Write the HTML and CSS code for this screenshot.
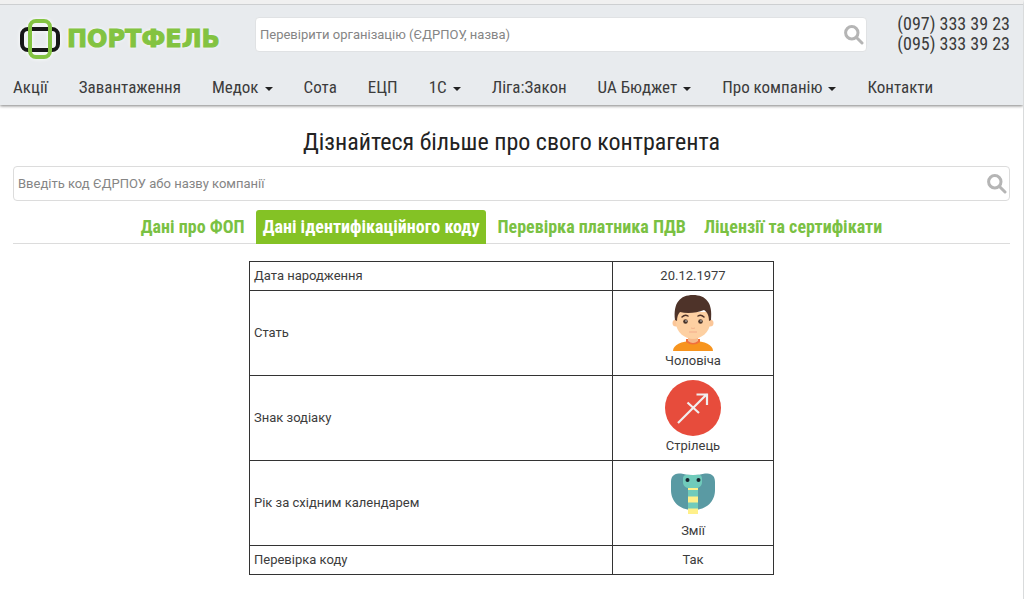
FILE: index.html
```html
<!DOCTYPE html>
<html lang="uk">
<head>
<meta charset="utf-8">
<meta name="viewport" content="width=device-width, initial-scale=1">
<title>Портфель</title>
<link rel="stylesheet" href="styles.css">
</head>
<body>
<header class="header">
  <div class="top">
    <a class="logo" href="#">
      <svg class="logo-mark" viewBox="0 0 42 42" aria-hidden="true">
        <rect x="3" y="11" width="36" height="21" rx="6" fill="none" stroke="#171717" stroke-width="4"/>
        <rect x="11" y="3" width="20" height="36" rx="6" fill="none" stroke="#83c341" stroke-width="4"/>
      </svg>
      <span class="logo-text">ПОРТФЕЛЬ</span>
    </a>
    <form class="search search-top" role="search">
      <input class="search-input" type="text" aria-label="Перевірити організацію" placeholder="Перевірити організацію (ЄДРПОУ, назва)">
      <button class="search-button" type="button" aria-label="Шукати">
        <svg viewBox="0 0 20 20" aria-hidden="true"><circle cx="7.800" cy="7.800" r="6.200"/><path d="M12.500 12.500L18 18"/></svg>
      </button>
    </form>
    <div class="phones"><a href="tel:0973333923">(097) 333 39 23</a><a href="tel:0953333923">(095) 333 39 23</a></div>
  </div>
  <nav class="nav">
    <a href="#">Акції</a>
    <a href="#">Завантаження</a>
    <a class="has-menu" href="#">Медок</a>
    <a href="#">Сота</a>
    <a href="#">ЕЦП</a>
    <a class="has-menu" href="#">1С</a>
    <a href="#">Ліга:Закон</a>
    <a class="has-menu" href="#">UA Бюджет</a>
    <a class="has-menu" href="#">Про компанію</a>
    <a href="#">Контакти</a>
  </nav>
</header>
<main class="main">
  <h1 class="title">Дізнайтеся більше про свого контрагента</h1>
  <form class="search" role="search">
    <input class="search-input" type="text" aria-label="Код або назва компанії" placeholder="Введіть код ЄДРПОУ або назву компанії">
    <button class="search-button" type="button" aria-label="Шукати">
      <svg viewBox="0 0 20 20" aria-hidden="true"><circle cx="7.800" cy="7.800" r="6.200"/><path d="M12.500 12.500L18 18"/></svg>
    </button>
  </form>
  <nav class="tabs">
    <a class="tab" href="#">Дані про ФОП</a>
    <a class="tab active" href="#" aria-current="page">Дані ідентифікаційного коду</a>
    <a class="tab" href="#">Перевірка платника ПДВ</a>
    <a class="tab" href="#">Ліцензії та сертифікати</a>
  </nav>
  <table class="result">
    <tr><th scope="row">Дата народження</th><td>20.12.1977</td></tr>
    <tr><th scope="row">Стать</th><td>
      <svg class="picture" viewBox="0 0 56 56" aria-hidden="true">
        <path d="M8 56C8 50 16 46 28 46S48 50 48 56Z" fill="#f7941e"/>
        <path d="M21 47Q28 52 35 47V44H21Z" fill="#f1703c"/>
        <path d="M23 39H33V46Q28 50 23 46Z" fill="#f6b98a"/>
        <circle cx="11" cy="28" r="3.500" fill="#fbc698"/><circle cx="45" cy="28" r="3.500" fill="#fbc698"/>
        <path d="M11 17H45V28C45 37 36 44 28 44S11 37 11 28Z" fill="#fdd0a2"/>
        <path d="M10 25C8 8 15 0 28 0S48 8 46 25L44 26C44 20 42 17 39 15C32 18 22 19 15 17C13 19 12 22 12 26Z" fill="#4e3329"/>
        <g fill="none" stroke="#4e3329" stroke-linecap="round"><path d="M17 22Q20 19 23 21M33 21Q36 19 39 22" stroke-width="1.500"/></g>
        <circle cx="20.500" cy="26.500" r="2.300" fill="#463329"/><circle cx="35.500" cy="26.500" r="2.300" fill="#463329"/>
        <circle cx="21" cy="26" r=".7" fill="#fff"/><circle cx="36" cy="26" r=".7" fill="#fff"/>
        <path d="M26 33Q28 34 30 33" fill="none" stroke="#f3b48d"/><path d="M24 37H32" stroke="#f3ac8c"/>
      </svg>Чоловіча</td></tr>
    <tr><th scope="row">Знак зодіаку</th><td>
      <svg class="picture" viewBox="0 0 56 56" aria-hidden="true">
        <circle cx="28" cy="28" r="28" fill="#e74c3c"/>
        <path d="M13 43L42 14M31.500 14.500H42V25M22.500 22.500L34 33" fill="none" stroke="#f0eeee" stroke-width="2.200"/>
      </svg>Стрілець</td></tr>
    <tr><th scope="row">Рік за східним календарем</th><td>
      <svg class="picture" viewBox="0 0 56 56" aria-hidden="true">
        <path d="M6 17C6 10 10 8.500 16 8.500Q22 10 28 10Q34 10 40 8.500C46 8.500 50 10 50 17V25C50 36 42 45 28 45S6 36 6 25Z" fill="#5a9aa3"/>
        <path d="M23 20H33V49H23Z" fill="#70cbbb"/>
        <path d="M18 14C18 8 24 10 28 10S37 8 37 14V17C37 21 34 23 31 23H24C21 23 18 21 18 17Z" fill="#70cbbb"/>
        <path d="M23 23H33V25H23ZM23 31.500H33V37.500H23ZM23 43.500H33V49H23Z" fill="#fff08a"/>
        <circle cx="22.500" cy="15" r="2" fill="#17222d"/><circle cx="33.500" cy="15" r="2" fill="#17222d"/>
      </svg>Змії</td></tr>
    <tr><th scope="row">Перевірка коду</th><td>Так</td></tr>
  </table>
</main>
</body>
</html>
```
FILE: styles.css
```css
* { box-sizing: border-box; }
html { background: #fff; }
body {
  margin: 0;
  min-height: 100vh;
  border-top: 4px solid #f0f0f0;
  border-right: 1px solid #d9dbdc;
  color: #3c3c3c;
  font: 13px/20px Roboto, "Noto Sans", sans-serif;
}
a { color: inherit; text-decoration: none; }
.header {
  background: #e8ebee;
  border-top: 1px solid #cdcfd1;
  box-shadow: 0 1px 3px rgba(0, 0, 0, .5);
  padding: 9px 13px 0;
}
.phones, .nav, .title, .tabs { font-family: "Roboto Condensed", Roboto, sans-serif; }
.top { display: flex; align-items: flex-start; }
.logo { display: flex; align-items: center; gap: 6px; width: 242px; padding: 4px 0 0 6px; flex: none; }
.logo-mark { width: 42px; height: 42px; filter: drop-shadow(0 0 2px #fff); }
.logo-text {
  color: #83c341;
  font: bold 24px/28px "DejaVu Sans", sans-serif;
  -webkit-text-stroke: 1px #83c341;
  text-shadow: 0 0 4px #fff;
}
.search {
  display: flex;
  height: 35px;
  background: #fff;
  border: 1px solid #dcdcdc;
  border-radius: 4px;
}
.search-top { flex: 1; margin-top: 3px; border-color: #e0e2e4; }
.search-input {
  flex: 1;
  min-width: 0;
  border: 0;
  background: none;
  padding: 0 4px;
  color: inherit;
  font: inherit;
}
.search-input::placeholder { color: #858585; opacity: 1; }
.search-button { border: 0; background: none; padding: 0 2px; width: 24px; }
.search-button svg { display: block; width: 20px; height: 20px; fill: none; stroke: #b5b5b5; stroke-width: 3; stroke-linecap: round; }
.phones { display: flex; flex-direction: column; align-items: flex-end; width: 143px; flex: none; font-size: 18px; }
.nav {
  display: flex;
  gap: 31px;
  padding: 15px 0 6px;
  font-size: 17px;
  line-height: 24px;
  white-space: nowrap;
}
.has-menu::after {
  content: "";
  display: inline-block;
  margin-left: 6px;
  vertical-align: 2px;
  border: 4px solid transparent;
  border-top-color: #222;
  border-bottom: 0;
}
.main { padding: 20px 13px; }
.title {
  margin: 0 0 7px;
  color: #222;
  text-align: center;
  font-size: 24px;
  font-weight: normal;
  line-height: 34px;
}
.tabs {
  display: flex;
  justify-content: center;
  gap: 4px;
  margin: 9px 0 17px;
  border-bottom: 1px solid #dcdcdc;
  color: #7ac143;
  font-size: 18px;
  font-weight: bold;
  white-space: nowrap;
}
.tab { padding: 7px; line-height: 20px; margin-bottom: -1px; border-radius: 3px 3px 0 0; }
.active { background: #84c225; color: #fff; }
.result { width: 525px; max-width: 100%; margin: 0 auto; border-collapse: collapse; table-layout: fixed; border: 1px solid #222; }
.result th, .result td { border: 1px solid #333; padding: 4px; font-weight: normal; }
.result th { text-align: left; }
.result td { width: 161px; text-align: center; }
.picture { display: block; width: 56px; height: 56px; margin: 0 auto; }
```
